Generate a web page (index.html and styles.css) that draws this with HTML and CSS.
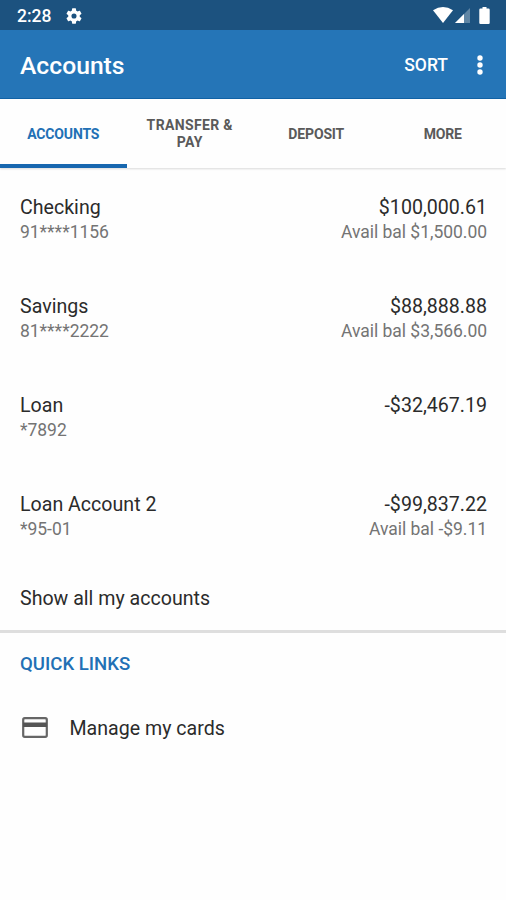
FILE: index.html
```
<!DOCTYPE html>
<html lang="en">
<head>
    <meta charset="UTF-8">
    <meta name="viewport" content="width=device-width, initial-scale=1.0">
    <title>Accounts</title>
    <link rel="stylesheet" href="styles.css">
</head>
<body>
    <div class="status-bar">
        <span class="time">2:28</span>
        <svg class="gear" viewBox="2 2 20 20"><path fill="#fff" d="M19.14 12.94c.04-.3.06-.61.06-.94s-.02-.64-.07-.94l2.03-1.58a.49.49 0 0 0 .12-.61l-1.92-3.32a.49.49 0 0 0-.59-.22l-2.39.96a7 7 0 0 0-1.62-.94l-.36-2.54A.48.48 0 0 0 13.92 2.4h-3.84a.48.48 0 0 0-.47.41l-.36 2.54a7 7 0 0 0-1.62.94l-2.39-.96a.49.49 0 0 0-.59.22L2.74 8.87a.48.48 0 0 0 .12.61l2.03 1.58c-.05.3-.09.63-.09.94s.02.64.07.94l-2.03 1.58a.49.49 0 0 0-.12.61l1.92 3.32c.12.22.37.29.59.22l2.39-.96c.5.38 1.03.7 1.62.94l.36 2.54c.05.24.24.41.48.41h3.84c.24 0 .44-.17.47-.41l.36-2.54a7 7 0 0 0 1.62-.94l2.39.96c.22.08.47 0 .59-.22l1.92-3.32a.48.48 0 0 0-.12-.61zM12 15.2a3.2 3.2 0 1 1 0-6.4 3.2 3.2 0 0 1 0 6.4z"/></svg>
        <div class="status-icons">
            <svg width="20" height="16" viewBox="0 0 20 16"><path fill="#fff" d="M0 3.2Q10-3.2 20 3.2L10 16z"/></svg>
            <svg width="15" height="16" viewBox="0 0 15 16"><path fill="#fff" fill-opacity=".3" d="M15 1v15H0z"/><path fill="#fff" d="M9 7v9H0z"/></svg>
            <svg class="battery" width="11" height="17" viewBox="0 0 11 17"><path fill="#fff" d="M3.500 0h4v1.500h2q1.200 0 1.200 1.200V16q0 1-1.200 1h-8q-1.200 0-1.200-1V2.700q0-1.200 1.200-1.200h2z"/></svg>
        </div>
    </div>

    <header class="app-bar">
        <h1>Accounts</h1>
        <span class="sort">SORT</span>
        <svg width="6" height="20" viewBox="0 0 6 20"><g fill="#fff"><circle cx="3" cy="3" r="2.700"/><circle cx="3" cy="10" r="2.700"/><circle cx="3" cy="17" r="2.700"/></g></svg>
    </header>

    <nav class="tabs">
        <div class="tab active">ACCOUNTS</div>
        <div class="tab wide">TRANSFER &amp;<br>PAY</div>
        <div class="tab">DEPOSIT</div>
        <div class="tab">MORE</div>
    </nav>

    <div class="accounts">
        <div class="account">
            <div>
                <div class="name">Checking</div>
                <div class="detail">91****1156</div>
            </div>
            <div class="balance">
                <div class="name">$100,000.61</div>
                <div class="detail">Avail bal $1,500.00</div>
            </div>
        </div>
        <div class="account">
            <div>
                <div class="name">Savings</div>
                <div class="detail">81****2222</div>
            </div>
            <div class="balance">
                <div class="name">$88,888.88</div>
                <div class="detail">Avail bal $3,566.00</div>
            </div>
        </div>
        <div class="account">
            <div>
                <div class="name">Loan</div>
                <div class="detail">*7892</div>
            </div>
            <div class="balance">
                <div class="name">-$32,467.19</div>
            </div>
        </div>
        <div class="account">
            <div>
                <div class="name">Loan Account 2</div>
                <div class="detail">*95-01</div>
            </div>
            <div class="balance">
                <div class="name">-$99,837.22</div>
                <div class="detail">Avail bal -$9.11</div>
            </div>
        </div>
    </div>

    <div class="show-all">Show all my accounts</div>

    <section class="quick-links">
        <h2>QUICK LINKS</h2>
        <div class="quick-link">
            <svg width="26" height="21" viewBox="0 0 26 21"><rect x="1.200" y="1.200" width="23.600" height="18.600" rx="1.500" fill="none" stroke="#666" stroke-width="2.200"/><path fill="#555" d="M1 5.500h24v4.500H1z"/></svg>
            <span>Manage my cards</span>
        </div>
    </section>
</body>
</html>
```
FILE: styles.css
```
body {
    margin: 0;
    font-family: Roboto, sans-serif;
    background: #fefefe;
    color: #2b2b2b;
}
svg {
    display: block;
    flex: none;
}
.status-bar {
    display: flex;
    align-items: center;
    height: 30px;
    padding: 0 16px 0 17px;
    box-sizing: border-box;
    background: #1c527f;
    color: #fff;
}
.time {
    width: 49px;
    padding-top: 1px;
    font-size: 17.5px;
    font-weight: 500;
}
.gear {
    width: 16px;
    height: 16px;
    margin-top: 1px;
}
.status-icons {
    display: flex;
    align-items: center;
    gap: 2px;
    margin-left: auto;
}
.battery {
    margin-left: 7px;
}
.app-bar {
    display: flex;
    align-items: center;
    height: 69px;
    padding: 1px 23px 0 20px;
    box-sizing: border-box;
    background: #2575b7;
    border-bottom: 1px solid #1263a7;
    color: #fff;
}
h1 {
    margin: 1px auto 0 0;
    font-size: 24.7px;
    font-weight: 500;
}
.sort {
    margin: 1px 29px 0 0;
    font-size: 17.5px;
    font-weight: 500;
}
.tabs {
    display: grid;
    grid-template-columns: repeat(4, 1fr);
    height: 69px;
    box-shadow: 0 1px 2px rgba(0, 0, 0, 0.15);
}
.tab {
    display: flex;
    align-items: center;
    justify-content: center;
    padding-top: 5px;
    border-bottom: 4px solid transparent;
    font-size: 14px;
    letter-spacing: -0.15px;
    line-height: 17px;
    font-weight: 700;
    text-align: center;
    color: #5a5a5a;
}
.tab.wide {
    letter-spacing: 0.35px;
}
.tab.active {
    border-color: #1767af;
    color: #2270b5;
}
.accounts {
    padding-top: 27px;
}
.account {
    display: flex;
    justify-content: space-between;
    height: 99px;
    padding: 0 19px 0 20px;
}
.balance {
    text-align: right;
}
.name {
    font-size: 19.6px;
    line-height: 26px;
}
.detail {
    font-size: 17.5px;
    letter-spacing: -0.03px;
    line-height: 23px;
    color: #747474;
}
.show-all {
    height: 39px;
    padding: 0 20px;
    font-size: 19.6px;
    line-height: 16px;
    border-bottom: 3px solid #dedede;
}
.quick-links {
    padding: 20px;
}
h2 {
    margin: 0;
    font-size: 18.6px;
    line-height: 22px;
    font-weight: 500;
    color: #2270b5;
}
.quick-link {
    display: flex;
    align-items: center;
    gap: 21.5px;
    margin-top: 41px;
    padding-left: 2px;
    font-size: 19.6px;
    line-height: 26px;
}
.quick-link svg {
    margin-top: -3px;
}
```
